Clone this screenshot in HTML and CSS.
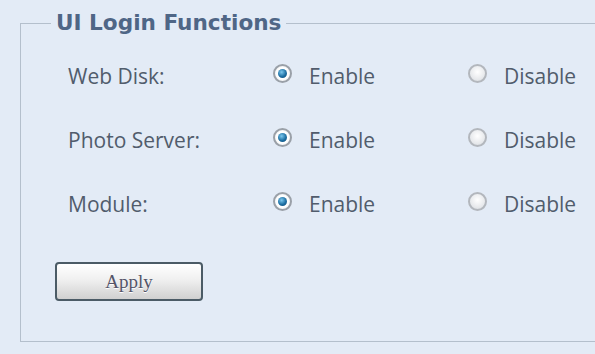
FILE: index.html
```html
<!DOCTYPE html>
<html lang="en">
<head>
    <meta charset="UTF-8">
    <meta name="viewport" content="width=device-width, initial-scale=1.0">
    <title>UI Login Functions</title>
    <link rel="stylesheet" href="styles.css">
</head>
<body>
    <form class="login-functions">
        <fieldset class="panel">
            <legend>UI Login Functions</legend>

            <div class="option-grid">
                <!-- Web Disk -->
                <div class="option-label">Web Disk:</div>
                <label class="radio"><input type="radio" name="webdisk" checked><span class="dot"></span>Enable</label>
                <label class="radio"><input type="radio" name="webdisk"><span class="dot"></span>Disable</label>

                <!-- Photo Server -->
                <div class="option-label">Photo Server:</div>
                <label class="radio"><input type="radio" name="photo" checked><span class="dot"></span>Enable</label>
                <label class="radio"><input type="radio" name="photo"><span class="dot"></span>Disable</label>

                <!-- Module -->
                <div class="option-label">Module:</div>
                <label class="radio"><input type="radio" name="module" checked><span class="dot"></span>Enable</label>
                <label class="radio"><input type="radio" name="module"><span class="dot"></span>Disable</label>
            </div>

            <button type="button" class="apply-btn">Apply</button>
        </fieldset>
    </form>
</body>
</html>
```

FILE: styles.css
```css
body {
    margin: 0;
    padding-top: 10px;
    background-color: #e3ebf6;
    font-family: "Open Sans", Arial, sans-serif;
    color: #515c6c;
    overflow: hidden;
}

.login-functions {
    margin: 0;
}

.panel {
    margin: 0 -20px 0 20px;
    padding: 18px 0 40px 47px;
    border: 1px solid #b4bfcc;
}

.panel legend {
    margin-left: -17px;
    padding: 0 5px;
    font-family: "DejaVu Sans", Verdana, sans-serif;
    font-weight: bold;
    font-size: 21.6px;
    line-height: 26px;
    color: #4f6686;
}

.option-grid {
    display: grid;
    grid-template-columns: 205px 195px auto;
    grid-auto-rows: 40px;
    row-gap: 24px;
    align-items: center;
}

.option-label {
    font-size: 21px;
    padding-top: 4px;
}

.radio {
    display: flex;
    align-items: center;
    gap: 17px;
    font-size: 21px;
    padding-top: 4px;
}

.radio input {
    display: none;
}

.radio .dot {
    width: 15px;
    height: 15px;
    border-radius: 50%;
    border: 2px solid #b3b7bd;
    background: radial-gradient(circle at 50% 40%, #ffffff, #e6e8eb 65%, #cdd1d6);
    margin-top: -6px;
    flex: none;
    position: relative;
}

.radio input:checked + .dot {
    border-color: #9aa0a8;
    background: radial-gradient(circle, #ffffff 55%, #dadde1);
}

.radio input:checked + .dot::after {
    content: "";
    position: absolute;
    left: 3px;
    top: 3px;
    width: 9px;
    height: 9px;
    border-radius: 50%;
    background: radial-gradient(circle at 40% 35%, #7cc8ee, #1d6fa3 55%, #0f4670);
}

.apply-btn {
    display: block;
    margin: 40px 0 0 -13px;
    width: 148px;
    height: 39px;
    border: 2px solid #4b5b66;
    border-radius: 4px;
    background: linear-gradient(#ffffff, #f0f0f0 45%, #d0d0d0);
    font-family: "Liberation Serif", "Times New Roman", serif;
    font-size: 19px;
    color: #545468;
    text-shadow: 0 1px 0 #ffffff;
    cursor: pointer;
}
```
